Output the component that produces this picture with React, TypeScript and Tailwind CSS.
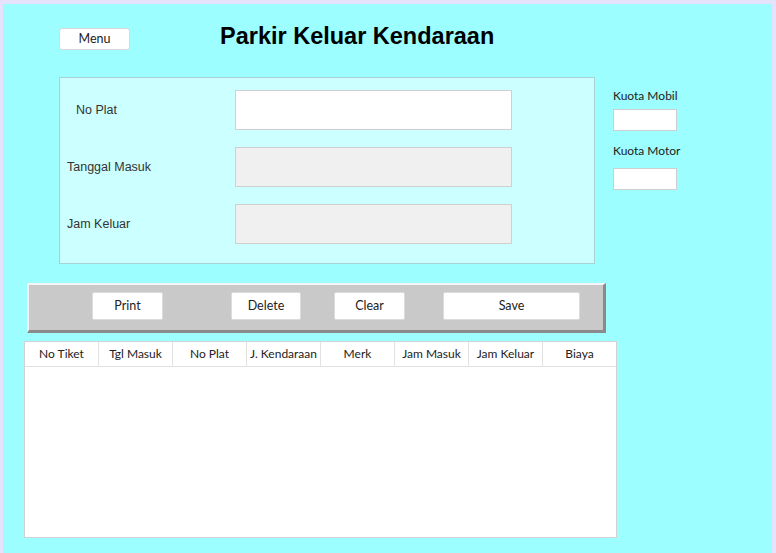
const columns = ['No Tiket', 'Tgl Masuk', 'No Plat', 'J. Kendaraan', 'Merk', 'Jam Masuk', 'Jam Keluar', 'Biaya']

function Btn({ label, w }: { label: string; w: string }) {
  return (
    <button
      className={`${w} h-[28px] bg-white border border-[#dcdcdc] rounded-[2px] text-[12.5px] text-[#222] font-['Lato',sans-serif]`}
    >
      {label}
    </button>
  )
}

export default function App() {
  const fields = [
    { label: 'No Plat', pad: 'pl-[16px]', bg: 'bg-white' },
    { label: 'Tanggal Masuk', pad: 'pl-[7px]', bg: 'bg-[#f0f0f0]' },
    { label: 'Jam Keluar', pad: 'pl-[7px]', bg: 'bg-[#f0f0f0]' },
  ]

  return (
    <div className="w-[776px] h-[553px] bg-[#e6e2fb] pt-[4px] pl-[3px] pr-[4px]">
      <div className="h-full bg-[#9cfefe] font-['Liberation_Sans',sans-serif]">
        {/* Header */}
        <div className="flex items-start pt-[18px]">
          <button className="ml-[56px] mt-[6px] w-[71px] h-[22px] bg-white border border-[#d8d8d8] rounded-[3px] text-[12.5px] text-[#222] font-['Lato',sans-serif]">
            Menu
          </button>
          <h1 className="ml-[90px] text-[23.5px] leading-[28px] font-bold text-black">Parkir Keluar Kendaraan</h1>
        </div>

        {/* Form + kuota */}
        <div className="flex mt-[27px]">
          <div className="ml-[56px] w-[536px] h-[187px] bg-[#ccffff] border border-[#a9d3d3] pt-[12px] flex flex-col gap-[17px]">
            {fields.map((f) => (
              <div key={f.label} className="flex items-center">
                <div className={`w-[175px] ${f.pad} text-[12.5px] text-[#333]`}>{f.label}</div>
                <div className={`w-[277px] h-[40px] ${f.bg} border border-[#cfcfcf]`} />
              </div>
            ))}
          </div>
          <div className="ml-[18px] pt-[12px] flex flex-col font-['Lato',sans-serif] text-[12px] text-[#222]">
            <div className="leading-[14px]">Kuota Mobil</div>
            <div className="mt-[6px] w-[64px] h-[22px] bg-white border border-[#cfcfcf]" />
            <div className="mt-[13px] leading-[14px]">Kuota Motor</div>
            <div className="mt-[10px] w-[64px] h-[22px] bg-white border border-[#cfcfcf]" />
          </div>
        </div>

        {/* Button bar */}
        <div className="ml-[24px] mt-[19px] w-[579px] h-[50px] bg-[#c9c9c9] border-t-2 border-l-2 border-t-[#f4f4f4] border-l-[#f4f4f4] border-b-[3px] border-r-[3px] border-b-[#8a8a8a] border-r-[#8a8a8a] pt-[7px] pl-[63px] flex items-start">
          <Btn label="Print" w="w-[71px]" />
          <Btn label="Delete" w="ml-[68px] w-[70px]" />
          <Btn label="Clear" w="ml-[33px] w-[71px]" />
          <Btn label="Save" w="ml-[38px] w-[137px]" />
        </div>

        {/* Table */}
        <div className="ml-[21px] mt-[8px] w-[593px] h-[197px] bg-white border border-[#d2d2d2] font-['Lato',sans-serif]">
          <div className="flex h-[25px] border-b border-[#e2e2e2]">
            {columns.map((c, i) => (
              <div
                key={c}
                className={`flex-1 flex items-center justify-center text-[12px] text-[#222] ${i < columns.length - 1 ? 'border-r border-[#e2e2e2]' : ''}`}
              >
                {c}
              </div>
            ))}
          </div>
        </div>
      </div>
    </div>
  )
}
